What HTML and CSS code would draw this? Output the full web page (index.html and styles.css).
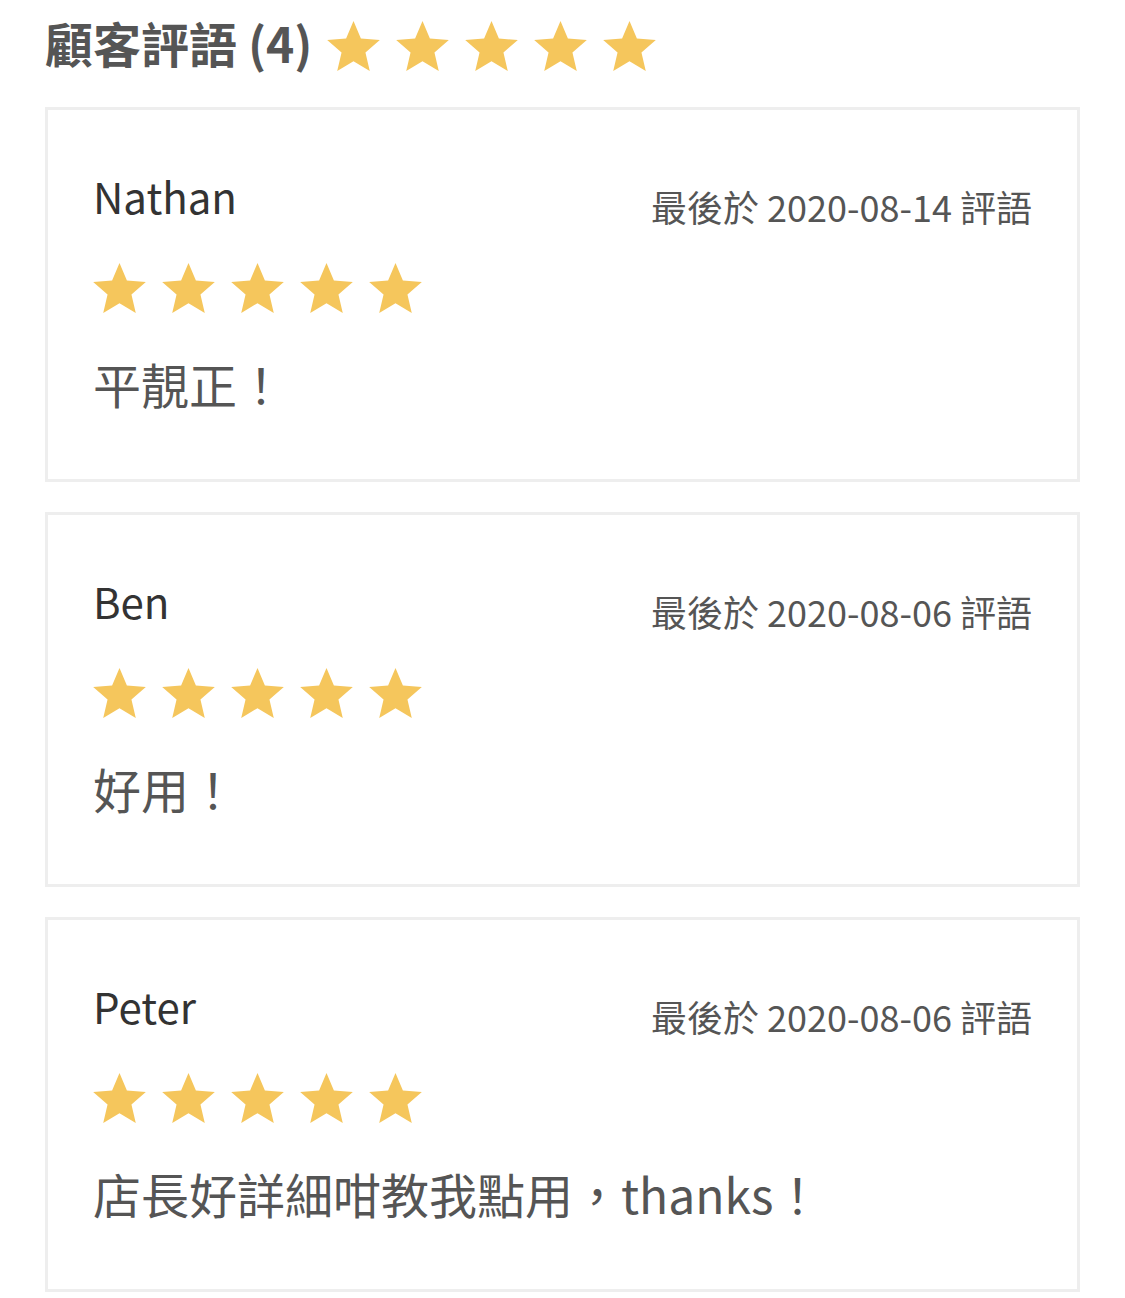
FILE: index.html
```html
<!DOCTYPE html>
<html lang="zh-Hant">
  <head>
    <meta charset="UTF-8" />
    <meta name="viewport" content="width=device-width, initial-scale=1.0" />
    <title>顧客評語</title>
    <link rel="stylesheet" href="styles.css">
  </head>
  <body>
    <svg width="0" height="0" class="defs">
      <symbol id="star" viewBox="2 2 20 19">
        <path d="M12 17.27L18.18 21l-1.64-7.03L22 9.24l-7.19-.61L12 2 9.19 8.63 2 9.24l5.46 4.73L5.82 21z" />
      </symbol>
    </svg>

    <div class="reviews">
      <div class="reviews-header">
        <h2 class="reviews-title">顧客評語 (4)</h2>
        <div class="stars header-stars">
          <svg class="star"><use href="#star" /></svg>
          <svg class="star"><use href="#star" /></svg>
          <svg class="star"><use href="#star" /></svg>
          <svg class="star"><use href="#star" /></svg>
          <svg class="star"><use href="#star" /></svg>
        </div>
      </div>

      <ul class="review-list">
        <li class="review-card">
          <div class="review-top">
            <div class="review-name">Nathan</div>
            <div class="review-date">最後於 2020-08-14 評語</div>
          </div>
          <div class="stars review-stars">
            <svg class="star"><use href="#star" /></svg>
            <svg class="star"><use href="#star" /></svg>
            <svg class="star"><use href="#star" /></svg>
            <svg class="star"><use href="#star" /></svg>
            <svg class="star"><use href="#star" /></svg>
          </div>
          <p class="review-text">平靚正！</p>
        </li>
        <li class="review-card">
          <div class="review-top">
            <div class="review-name">Ben</div>
            <div class="review-date">最後於 2020-08-06 評語</div>
          </div>
          <div class="stars review-stars">
            <svg class="star"><use href="#star" /></svg>
            <svg class="star"><use href="#star" /></svg>
            <svg class="star"><use href="#star" /></svg>
            <svg class="star"><use href="#star" /></svg>
            <svg class="star"><use href="#star" /></svg>
          </div>
          <p class="review-text">好用！</p>
        </li>
        <li class="review-card">
          <div class="review-top">
            <div class="review-name">Peter</div>
            <div class="review-date">最後於 2020-08-06 評語</div>
          </div>
          <div class="stars review-stars">
            <svg class="star"><use href="#star" /></svg>
            <svg class="star"><use href="#star" /></svg>
            <svg class="star"><use href="#star" /></svg>
            <svg class="star"><use href="#star" /></svg>
            <svg class="star"><use href="#star" /></svg>
          </div>
          <p class="review-text">店長好詳細咁教我點用，thanks！</p>
        </li>
      </ul>
    </div>
  </body>
</html>
```

FILE: styles.css
```css
body {
  margin: 0;
  padding: 8px 45px 0;
  background-color: #fff;
  font-family: "Noto Sans CJK TC", "Noto Sans", sans-serif;
  color: #555;
}

.defs {
  position: absolute;
}

.reviews-header {
  display: flex;
  align-items: center;
  gap: 14px;
  height: 68px;
  margin-bottom: 31px;
}

.reviews-title {
  margin: 0;
  font-size: 48px;
  line-height: 68px;
  font-weight: 700;
  color: #555;
}

.stars {
  display: flex;
  gap: 16px;
}

.header-stars {
  margin-top: 8px;
}

.star {
  width: 53px;
  height: 50px;
  fill: #f5c65c;
}

.review-list {
  list-style-type: none;
  margin: 0;
  padding: 0;
  display: flex;
  flex-direction: column;
  gap: 30px;
}

.review-card {
  border: 3px solid #eeeeee;
  padding: 56px 45px 62px;
}

.review-top {
  display: flex;
  justify-content: space-between;
  align-items: flex-start;
  height: 60px;
}

.review-name {
  font-size: 42px;
  line-height: 60px;
  color: #333;
}

.review-date {
  font-size: 36px;
  line-height: 60px;
  margin-top: 10px;
  color: #555;
}

.review-stars {
  margin-top: 37px;
}

.review-text {
  margin: 36px 0 0;
  font-size: 48px;
  line-height: 68px;
  color: #555;
}
```
